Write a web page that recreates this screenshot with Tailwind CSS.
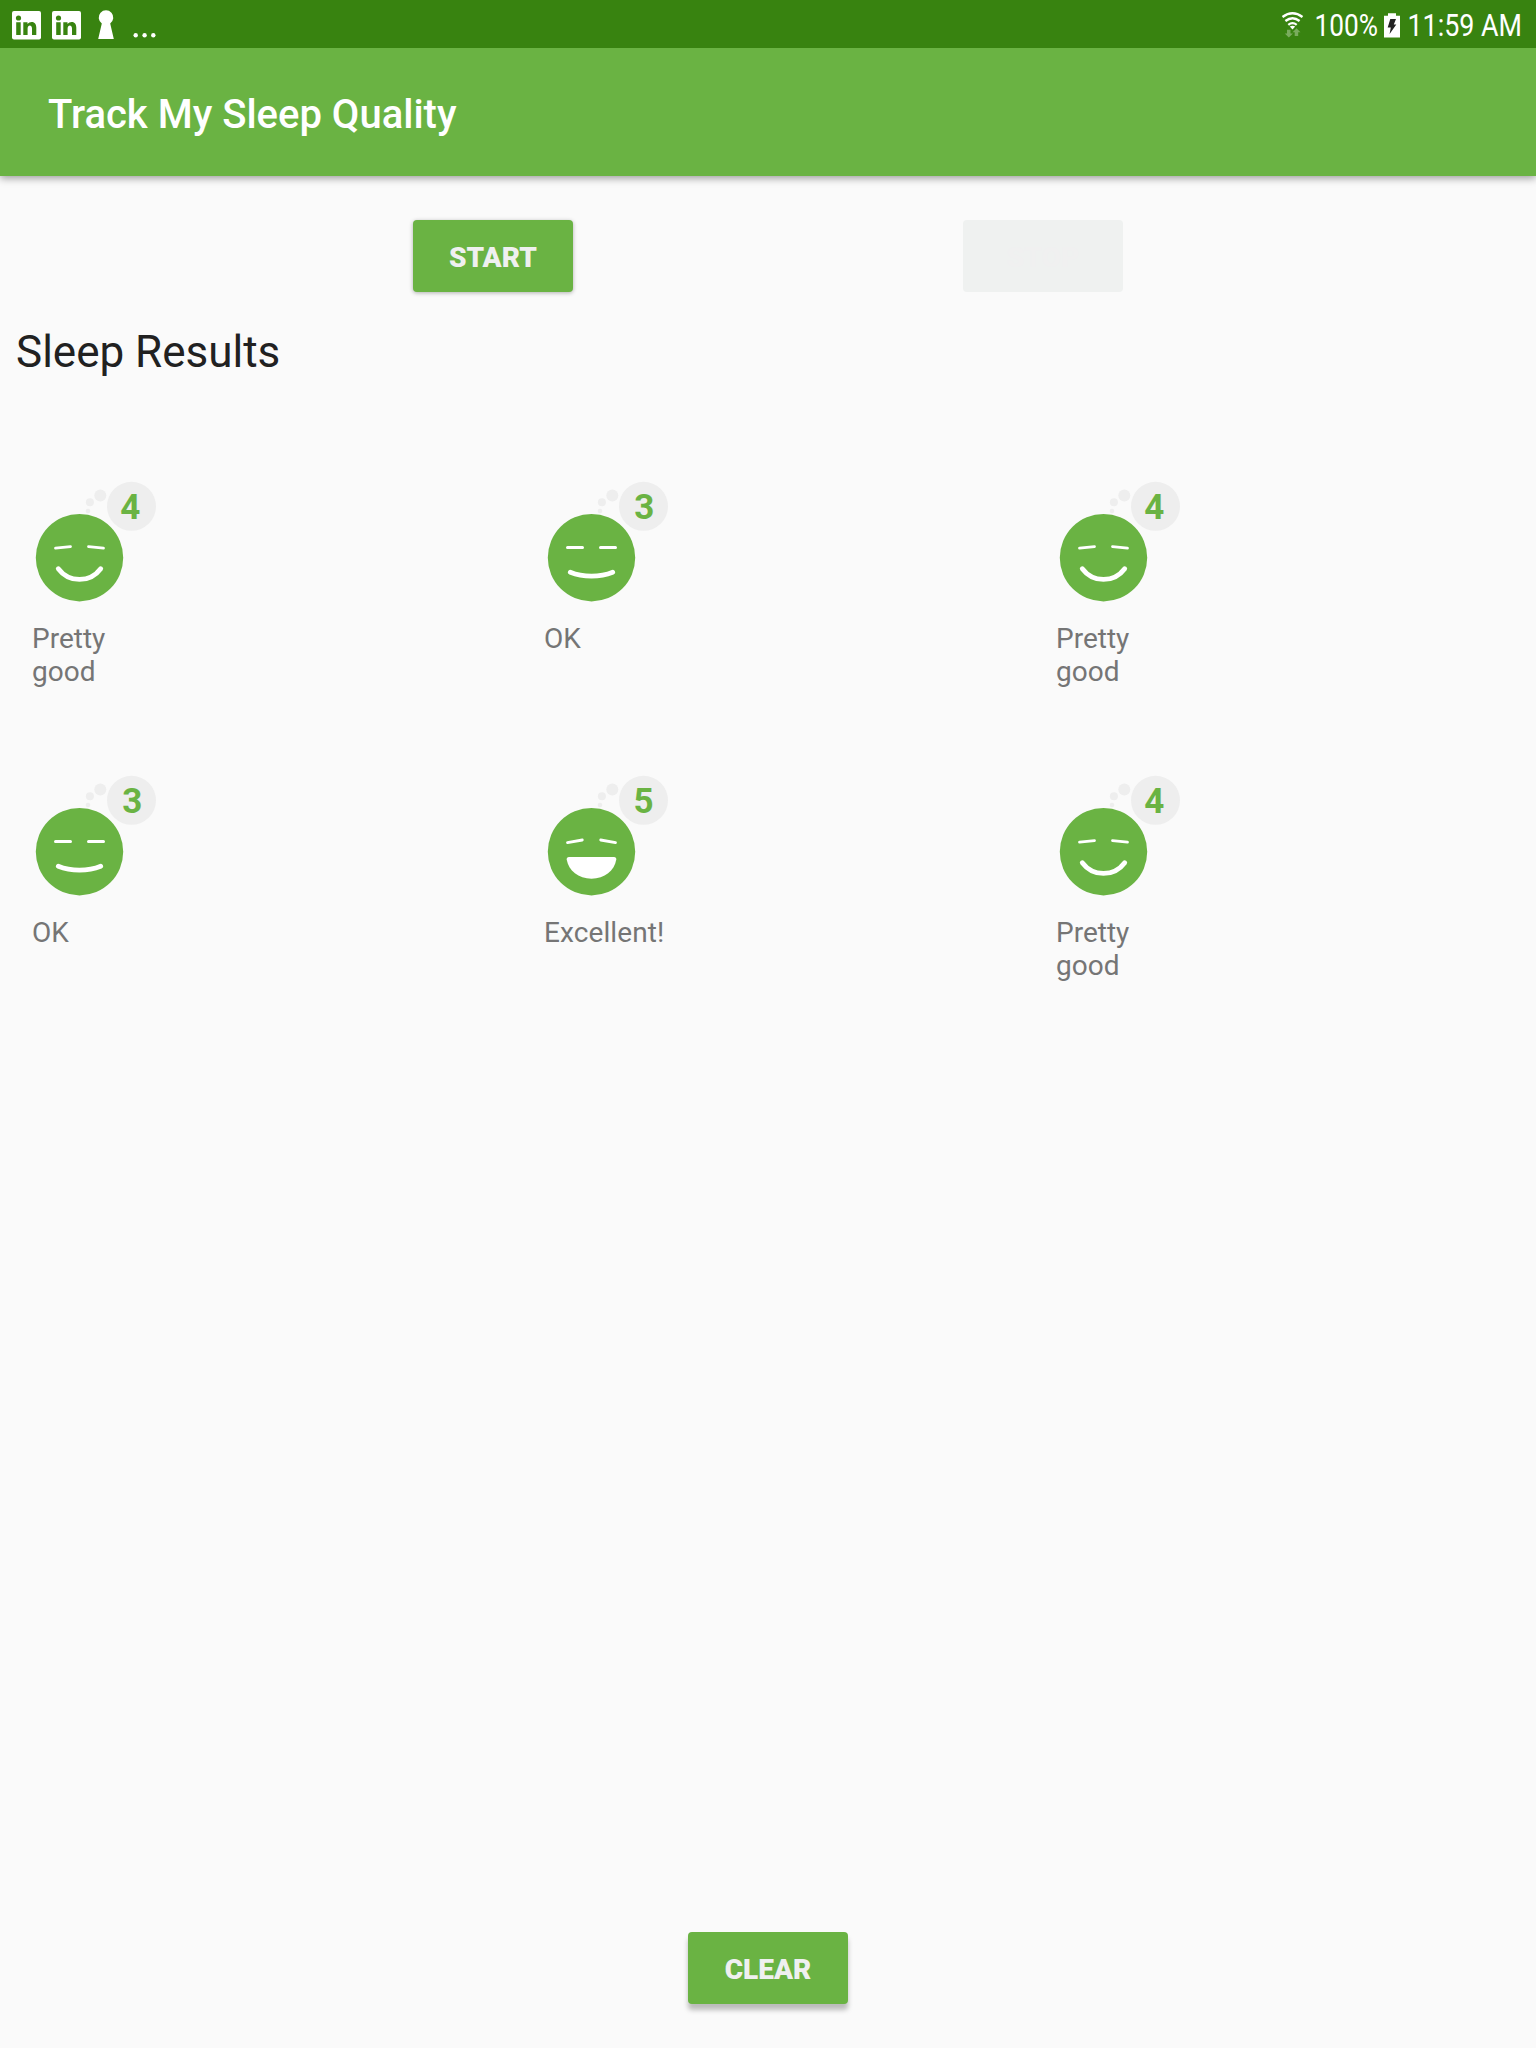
<!DOCTYPE html>
<html lang="en">
<head>
<meta charset="utf-8">
<title>Track My Sleep Quality</title>
<script src="https://cdn.jsdelivr.net/npm/@tailwindcss/browser@4"></script>
</head>
<body class="bg-[#fafafa]">
<svg class="hidden">
  <defs>
    <g id="base">
      <circle cx="47.5" cy="77.7" r="43.7" fill="#6ab343"/>
      <g fill="#eee"><circle cx="99.5" cy="26.3" r="24.5"/><circle cx="68.3" cy="15.6" r="6"/><circle cx="57.9" cy="22.3" r="4"/><circle cx="56" cy="31" r="2.3"/></g>
    </g>
    <g id="face3" fill="none" stroke="#fff" stroke-linecap="round">
      <path stroke-width="3" d="M23.5 67.5H38.5M56.5 67.5H71.5"/>
      <path stroke-width="4.8" d="M26.3 92.2C39 97.4 56 97.4 68.7 92.2"/>
    </g>
    <g id="face4" fill="none" stroke="#fff" stroke-linecap="round">
      <path stroke-width="2.8" d="M23.5 68.2L38.5 66.7M56.5 66.7L71.5 68.2"/>
      <path stroke-width="4.8" d="M26.3 88.7C37 103 58 103 68.7 88.7"/>
    </g>
    <g id="face5" stroke="#fff" stroke-linecap="round">
      <path stroke-width="2.8" d="M23.5 68.6L38.3 66M56.7 66L71.5 68.6"/>
      <path fill="#fff" stroke="none" d="M25 83H70Q72.5 83 72.3 85.5C70.5 96.5 60.5 104.7 47.5 104.7S24.500 96.500 22.700 85.500Q22.500 83 25 83Z"/>
    </g>
  </defs>
</svg>
<div class="w-[1536px] h-[2048px] flex flex-col bg-[#fafafa] font-['Roboto',sans-serif] overflow-hidden">
  <div class="relative z-10 h-12 shrink-0 bg-[#388310] flex items-center justify-between">
    <svg class="w-[180px] h-12" viewBox="0 0 180 48">
      <g id="li">
        <rect x="12" y="11" width="29" height="28.500" rx="2" fill="#fff"/>
        <g fill="#388310"><circle cx="18.500" cy="18" r="2.600"/><path d="M16.200 22.200H20.700V35H16.200ZM23.300 22.200H27.500V24C30 20.700 36.300 21 36.300 27.500V35H32V28.500C32 24.500 27.600 24.700 27.600 28.500V35H23.300Z"/></g>
      </g>
      <use href="#li" x="40"/>
      <path fill="#fff" d="M101.800 23.500A7.300 7.300 0 1 1 110.200 23.500L113.800 39H98.200Z"/>
      <g fill="#fff"><circle cx="135.700" cy="35.300" r="2.200"/><circle cx="144.600" cy="35.300" r="2.200"/><circle cx="153.300" cy="35.300" r="2.200"/></g>
    </svg>
    <svg class="w-[270px] h-12 font-['Roboto',sans-serif]" viewBox="0 0 270 48">
      <g fill="none" stroke="#fff" stroke-width="2.300">
        <path d="M16.500 17Q26.500 9.500 36.500 17M19.400 21Q26.500 15.400 33.600 21M22.300 24.800Q26.500 21.400 30.700 24.800"/>
      </g>
      <path fill="#fff" d="M23.800 26.500Q26.500 24.800 29.200 26.500L26.500 29.500Z"/>
      <path fill="#79ac5d" d="M21 29.800H24.500V33.500H27L22.800 37.500L18.800 33.500H21ZM28.700 36V32.300H26.500L30.500 28.300L34.500 32.300H32.200V36Z"/>
      <text x="48.500" y="36" font-size="30.500" fill="#fff" textLength="63.500" lengthAdjust="spacingAndGlyphs">100%</text>
      <path fill="#fff" d="M122 13.200H130V15.800H134V37.500H118V15.800H122Z"/>
      <path fill="#222" d="M124.300 19H130L127.800 24.500H130.300L123.600 34L124.800 27.500H121.700Z"/>
      <text x="141.500" y="36" font-size="30.500" fill="#fff" textLength="114.500" lengthAdjust="spacingAndGlyphs">11:59 AM</text>
    </svg>
  </div>
  <header class="h-32 shrink-0 bg-[#6ab343] flex items-center pl-12 pt-1.5 shadow-[0_2px_8px_rgba(0,0,0,0.4)]">
    <h1 class="text-[40px] leading-[48px] font-medium text-white">Track My Sleep Quality</h1>
  </header>
  <div class="mt-11 flex shrink-0">
    <button class="ml-[413px] w-40 h-[72px] pt-1 rounded bg-[#6ab343] text-[#eff0f0] text-[28px] font-black shadow-[0_1px_4px_rgba(0,0,0,0.3)]">START</button>
    <button class="ml-[390px] w-40 h-[72px] pt-1 rounded bg-[#eff1f0] text-[#f0f0f0] text-[28px] font-black" disabled>STOP</button>
  </div>
  <h2 class="mt-[34px] ml-4 text-[44px] leading-[52px] text-[#212121] shrink-0">Sleep Results</h2>
  <main class="mt-[102px] grid grid-cols-3 auto-rows-[294px] text-[28px] leading-[33px] text-[#757575]">
    <div class="pl-8">
      <svg class="w-32 h-32" viewBox="0 0 128 128"><use href="#base"/><use href="#face4"/><text x="98.300" y="38.500" text-anchor="middle" font-size="35" font-weight="700" fill="#6ab343">4</text></svg>
      <p class="mt-[14px] w-32">Pretty<br>good</p>
    </div>
    <div class="pl-8">
      <svg class="w-32 h-32" viewBox="0 0 128 128"><use href="#base"/><use href="#face3"/><text x="100.300" y="38.500" text-anchor="middle" font-size="35" font-weight="700" fill="#6ab343">3</text></svg>
      <p class="mt-[14px] w-32">OK</p>
    </div>
    <div class="pl-8">
      <svg class="w-32 h-32" viewBox="0 0 128 128"><use href="#base"/><use href="#face4"/><text x="98.300" y="38.500" text-anchor="middle" font-size="35" font-weight="700" fill="#6ab343">4</text></svg>
      <p class="mt-[14px] w-32">Pretty<br>good</p>
    </div>
    <div class="pl-8">
      <svg class="w-32 h-32" viewBox="0 0 128 128"><use href="#base"/><use href="#face3"/><text x="100.300" y="38.500" text-anchor="middle" font-size="35" font-weight="700" fill="#6ab343">3</text></svg>
      <p class="mt-[14px] w-32">OK</p>
    </div>
    <div class="pl-8">
      <svg class="w-32 h-32" viewBox="0 0 128 128"><use href="#base"/><use href="#face5"/><text x="99.500" y="38.500" text-anchor="middle" font-size="35" font-weight="700" fill="#6ab343">5</text></svg>
      <p class="mt-[14px] w-32 tracking-[0.1px]">Excellent!</p>
    </div>
    <div class="pl-8">
      <svg class="w-32 h-32" viewBox="0 0 128 128"><use href="#base"/><use href="#face4"/><text x="98.300" y="38.500" text-anchor="middle" font-size="35" font-weight="700" fill="#6ab343">4</text></svg>
      <p class="mt-[14px] w-32">Pretty<br>good</p>
    </div>
  </main>
  <footer class="mt-auto mb-11 shrink-0 flex justify-center">
    <button class="w-40 h-[72px] pt-1 rounded bg-[#6ab343] text-[#eff0f0] text-[28px] font-black shadow-[0_6px_5px_rgba(0,0,0,0.25)]">CLEAR</button>
  </footer>
</div>
</body>
</html>
